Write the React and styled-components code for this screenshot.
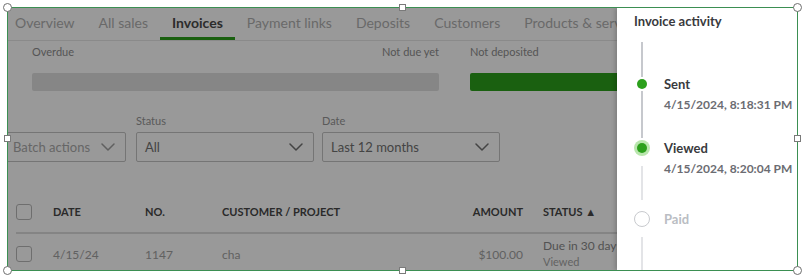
import React from "react";
import styled, { createGlobalStyle } from "styled-components";

const GlobalStyle = createGlobalStyle`
  * { box-sizing: border-box; }
  body {
    margin: 0;
    background: #ffffff;
    font-family: Lato, "Open Sans", Arial, sans-serif;
  }
`;

const tabs = ["Overview", "All sales", "Invoices", "Payment links", "Deposits", "Customers", "Products & services"];

const Chevron = () => (
  <svg width="14" height="8" viewBox="0 0 14 8" fill="none">
    <polyline points="1,1 7,7 13,1" stroke="currentColor" strokeWidth="1.5" strokeLinecap="round" strokeLinejoin="round" />
  </svg>
);

function App() {
  return (
    <Page>
      <GlobalStyle />
      <Frame>
        <Canvas>
          <Main>
            <TabBar>
              {tabs.map((t) => (
                <Tab key={t} active={t === "Invoices"}>
                  {t}
                </Tab>
              ))}
            </TabBar>

            <Summary>
              <SummaryGroup width="407px">
                <SummaryLabels>
                  <span>Overdue</span>
                  <span>Not due yet</span>
                </SummaryLabels>
                <Bar color="#e0e0e0" />
              </SummaryGroup>
              <SummaryGroup width="300px">
                <SummaryLabels>
                  <span>Not deposited</span>
                </SummaryLabels>
                <Bar color="#2ca01c" />
              </SummaryGroup>
            </Summary>

            <Filters>
              <Field>
                <Select width="128px" muted>
                  <span>Batch actions</span>
                  <Chevron />
                </Select>
              </Field>
              <Field>
                <FieldLabel>Status</FieldLabel>
                <Select width="178px">
                  <span>All</span>
                  <Chevron />
                </Select>
              </Field>
              <Field>
                <FieldLabel>Date</FieldLabel>
                <Select width="178px">
                  <span>Last 12 months</span>
                  <Chevron />
                </Select>
              </Field>
            </Filters>

            <Table>
              <HeaderRow>
                <Checkbox />
                <span>Date</span>
                <span>No.</span>
                <span>Customer / project</span>
                <Amount>Amount</Amount>
                <span>Status ▲</span>
              </HeaderRow>
              <BodyRow>
                <Checkbox />
                <span>4/15/24</span>
                <span>1147</span>
                <span>cha</span>
                <Amount>$100.00</Amount>
                <StatusCell>
                  <StatusMain>Due in 30 days</StatusMain>
                  <StatusSub>Viewed</StatusSub>
                </StatusCell>
              </BodyRow>
            </Table>

            <Overlay />
          </Main>

          <Panel>
            <PanelTitle>Invoice activity</PanelTitle>
            <Timeline>
              <Step>
                <MarkerCol>
                  <Line height="35px" />
                  <DotBox height="14px">
                    <Dot />
                  </DotBox>
                  <Line height="47px" />
                </MarkerCol>
                <StepText top="33px">
                  <StepTitle>Sent</StepTitle>
                  <StepDate>4/15/2024, 8:18:31 PM</StepDate>
                </StepText>
              </Step>
              <Step>
                <MarkerCol>
                  <DotBox height="20px">
                    <Dot halo />
                  </DotBox>
                  <Line height="34px" light gap="8px" />
                </MarkerCol>
                <StepText top="1px">
                  <StepTitle>Viewed</StepTitle>
                  <StepDate>4/15/2024, 8:20:04 PM</StepDate>
                </StepText>
              </Step>
              <Step>
                <MarkerCol>
                  <DotBox height="18px" gap="10px">
                    <EmptyDot />
                  </DotBox>
                  <Line height="60px" light gap="9px" />
                </MarkerCol>
                <StepText top="10px">
                  <StepTitle pending>Paid</StepTitle>
                </StepText>
              </Step>
            </Timeline>
          </Panel>
        </Canvas>

        <CornerHandle style={{ left: -5, top: -5 }} />
        <CornerHandle style={{ right: -5, top: -5 }} />
        <CornerHandle style={{ left: -5, bottom: -5 }} />
        <CornerHandle style={{ right: -5, bottom: -5 }} />
        <SideHandle style={{ left: "calc(50% - 4px)", top: -4 }} />
        <SideHandle style={{ left: "calc(50% - 4px)", bottom: -4 }} />
        <SideHandle style={{ left: -4, top: "calc(50% - 4px)" }} />
        <SideHandle style={{ right: -4, top: "calc(50% - 4px)" }} />
      </Frame>
    </Page>
  );
}

export default App;

const Page = styled.div`
  padding: 7px;
  width: 805px;
  height: 278px;
`;

const Frame = styled.div`
  position: relative;
  width: 791px;
  height: 264px;
  border: 1px solid #3b8f52;
`;

const Canvas = styled.div`
  display: flex;
  width: 100%;
  height: 100%;
  overflow: hidden;
`;

const Main = styled.div`
  position: relative;
  flex: 1;
  min-width: 0;
  overflow: hidden;
  background: #ffffff;
`;

const Overlay = styled.div`
  position: absolute;
  inset: 0;
  background: rgba(0, 0, 0, 0.4);
`;

const TabBar = styled.div`
  display: flex;
  height: 33px;
  margin-left: -5px;
  border-bottom: 1px solid #e6e6e6;
  white-space: nowrap;
`;

const Tab = styled.div`
  display: flex;
  align-items: center;
  padding: 0 12px;
  height: 32px;
  border-bottom: 3px solid ${(p) => (p.active ? "#2ca01c" : "transparent")};
  font-size: 14px;
  font-weight: ${(p) => (p.active ? 700 : 400)};
  color: ${(p) => (p.active ? "#4a4a4a" : "#b0b0b0")};
`;

const Summary = styled.div`
  display: flex;
  gap: 31px;
  padding: 4px 0 0 24px;
`;

const SummaryGroup = styled.div`
  flex: 0 0 ${(p) => p.width};
  display: flex;
  flex-direction: column;
  gap: 14px;
`;

const SummaryLabels = styled.div`
  display: flex;
  justify-content: space-between;
  font-size: 11px;
  line-height: 14px;
  color: #8e8e8e;
`;

const Bar = styled.div`
  height: 18px;
  border-radius: 2px;
  background: ${(p) => p.color};
`;

const Filters = styled.div`
  display: flex;
  align-items: flex-end;
  gap: 8px;
  margin: 23px 0 0 -10px;
`;

const Field = styled.div`
  display: flex;
  flex-direction: column;
  gap: 4px;
  &:first-child {
    margin-right: 2px;
  }
`;

const FieldLabel = styled.div`
  font-size: 11px;
  line-height: 14px;
  color: #969696;
`;

const Select = styled.div`
  display: flex;
  align-items: center;
  justify-content: space-between;
  width: ${(p) => p.width};
  height: 30px;
  padding: 0 10px 0 ${(p) => (p.muted ? "14px" : "8px")};
  border: 1px solid #c4c4c4;
  border-radius: 2px;
  font-size: 13px;
  color: ${(p) => (p.muted ? "#ababab" : "#727272")};
  svg {
    color: ${(p) => (p.muted ? "#a0a0a0" : "#727272")};
  }
`;

const Table = styled.div`
  margin-top: 30px;
  padding-left: 8px;
`;

const Row = styled.div`
  display: grid;
  grid-template-columns: 37px 92px 77px 241px 80px 1fr;
  align-items: center;
  white-space: nowrap;
`;

const HeaderRow = styled(Row)`
  height: 42px;
  border-bottom: 2px solid #dcdcdc;
  padding-bottom: 1px;
  font-size: 11px;
  font-weight: 700;
  text-transform: uppercase;
  color: #474747;
`;

const BodyRow = styled(Row)`
  height: 40px;
  font-size: 12px;
  color: #a2a2a2;
`;

const Amount = styled.span`
  text-align: right;
  padding-right: 20px;
`;

const Checkbox = styled.div`
  width: 16px;
  height: 16px;
  border: 1px solid #b8b8b8;
  border-radius: 3px;
`;

const StatusCell = styled.div`
  display: flex;
  flex-direction: column;
`;

const StatusMain = styled.span`
  font-size: 12px;
  line-height: 16px;
  color: #8a8a8a;
`;

const StatusSub = styled.span`
  font-size: 11px;
  line-height: 16px;
  color: #a5a5a5;
`;

const Panel = styled.div`
  position: relative;
  z-index: 1;
  flex: 0 0 180px;
  background: #ffffff;
  padding-left: 17px;
  box-shadow: -2px 0 4px rgba(0, 0, 0, 0.18);
`;

const PanelTitle = styled.div`
  padding-top: 4px;
  font-size: 13px;
  line-height: 18px;
  font-weight: 700;
  color: #393a3d;
`;

const Timeline = styled.div`
  margin-top: 12px;
  display: flex;
  flex-direction: column;
`;

const Step = styled.div`
  display: flex;
  gap: 14px;
`;

const MarkerCol = styled.div`
  flex: 0 0 16px;
  display: flex;
  flex-direction: column;
  align-items: center;
`;

const Line = styled.div`
  width: 2px;
  height: ${(p) => p.height};
  margin-top: ${(p) => p.gap || 0};
  background: ${(p) => (p.light ? "#e3e4e7" : "#c6c8cd")};
`;

const DotBox = styled.div`
  height: ${(p) => p.height};
  margin-top: ${(p) => p.gap || 0};
  display: flex;
  align-items: center;
  justify-content: center;
`;

const Dot = styled.div`
  width: 10px;
  height: 10px;
  border-radius: 50%;
  background: #2ca01c;
  box-shadow: ${(p) => (p.halo ? "0 0 0 3px #b9e6ad" : "none")};
`;

const EmptyDot = styled.div`
  width: 16px;
  height: 16px;
  border-radius: 50%;
  border: 1px solid #c8cace;
  background: #ffffff;
`;

const StepText = styled.div`
  padding-top: ${(p) => p.top};
  display: flex;
  flex-direction: column;
  gap: 4px;
  white-space: nowrap;
`;

const StepTitle = styled.div`
  font-size: 13px;
  line-height: 18px;
  font-weight: 700;
  color: ${(p) => (p.pending ? "#babdc3" : "#393a3d")};
`;

const StepDate = styled.div`
  font-size: 12px;
  line-height: 16px;
  font-weight: 700;
  color: #6b6c72;
`;

const CornerHandle = styled.div`
  position: absolute;
  width: 9px;
  height: 9px;
  border-radius: 50%;
  border: 1px solid #6f6f6f;
  background: #ffffff;
  z-index: 2;
`;

const SideHandle = styled.div`
  position: absolute;
  width: 7px;
  height: 7px;
  border: 1px solid #7a7a7a;
  background: #ffffff;
  z-index: 2;
`;
